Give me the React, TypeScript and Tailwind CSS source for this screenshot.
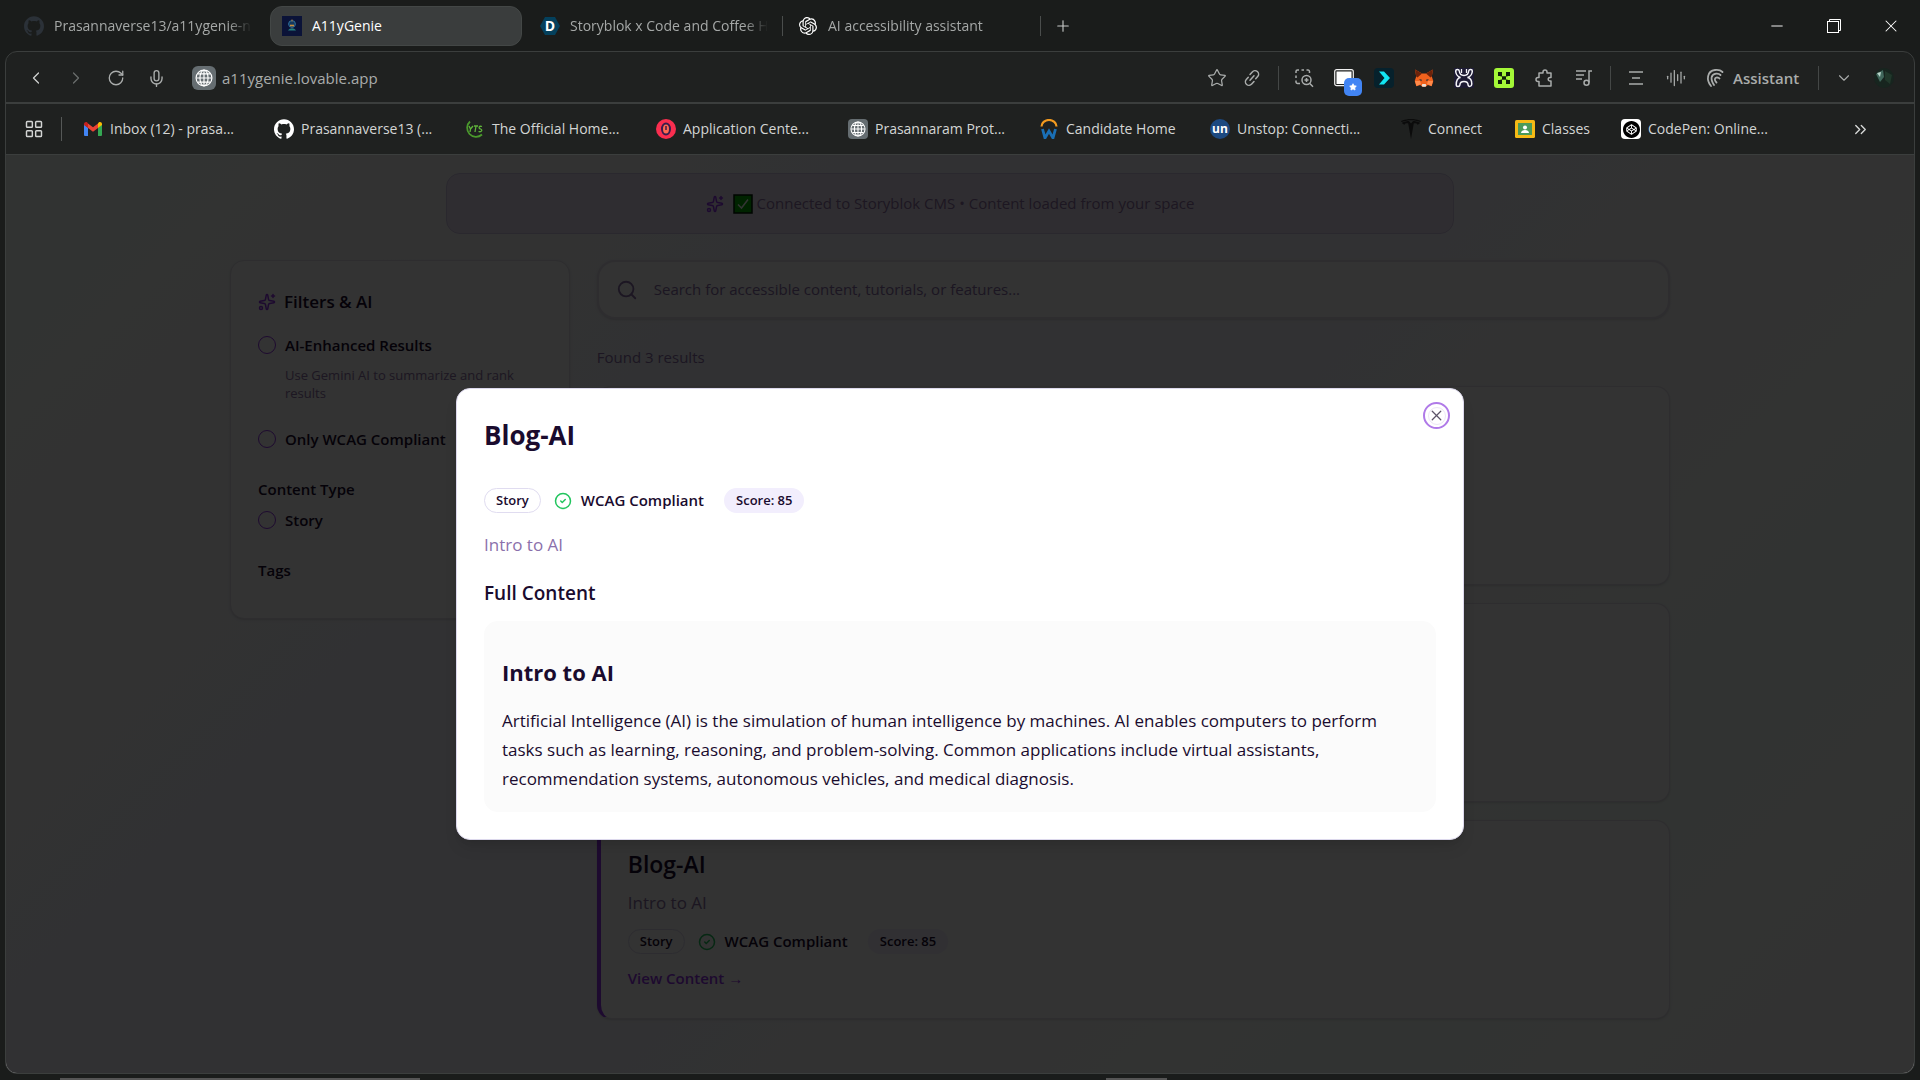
import React from "react";
import { Sparkles, Search, CircleCheck, X, ChevronLeft, ChevronRight, ChevronDown, RotateCw, Mic, LayoutGrid, Star, Plus, Minus, AudioLines, ChevronsRight } from "lucide-react";
import { SiGithub, SiOpenai, SiTesla, SiCodepen } from "react-icons/si";

const Gmail = () => (
  <svg viewBox="0 0 20 20" className="h-5 w-5">
    <path d="M1 5.5V16a1 1 0 0 0 1 1h3V8.5z" fill="#4285f4" />
    <path d="M15 8.5V17h3a1 1 0 0 0 1-1V5.500z" fill="#34a853" />
    <path d="M15 4.500V9l4-3V5c0-1.800-2-2.700-3.300-1.600z" fill="#fbbc04" />
    <path d="M5 9V4.500L10 8.300 15 4.500V9l-5 3.800z" fill="#ea4335" />
    <path d="M1 5v1l4 3V4.500l-.7-1.100C3 2.300 1 3.200 1 5z" fill="#c5221f" />
  </svg>
);

const Yts = () => (
  <svg viewBox="0 0 20 20" className="h-5 w-5">
    <path d="M5 2.500A8.500 8.500 0 0 0 17 15.500" fill="none" stroke="#4a9a2c" strokeWidth="1.800" />
    <path d="M4 7l1.500 3L8 7M5.500 10L5 13M9 7h4M11 7l-1 6M17 7.500c-3-1-4 1.500-1.500 2.500s1 3.500-2 2.500" fill="none" stroke="#5fb33a" strokeWidth="1.300" />
  </svg>
);

const OperaRed = () => (
  <svg viewBox="0 0 20 20" className="h-5 w-5">
    <circle cx="10" cy="10" r="10" fill="#fa2e4f" />
    <ellipse cx="10" cy="10" rx="4" ry="5.500" fill="#ff6a50" stroke="#3a1c4c" strokeWidth="2" />
    <path d="M10 7v4" stroke="#3a1c4c" strokeWidth="1.500" />
  </svg>
);

const GlobeTile = ({ big = false }: { big?: boolean }) => (
  <span className={big ? "flex h-6 w-6 items-center justify-center rounded-md bg-[#656d71] text-white" : "flex h-5 w-5 items-center justify-center rounded bg-[#656d71] text-white"}>
    <svg viewBox="0 0 20 20" className={big ? "h-[18px] w-[18px]" : "h-4 w-4"} fill="none" stroke="currentColor" strokeWidth="1.300">
      <circle cx="10" cy="10" r="8.800" />
      <ellipse cx="10" cy="10" rx="4.500" ry="8.800" />
      <path d="M10 1.500v17M1.500 10h17M3 5.500h14M3 14.500h14" />
    </svg>
  </span>
);

const Workday = () => (
  <svg viewBox="0 0 20 20" className="h-5 w-5">
    <path d="M2.500 7.500a7.500 6.500 0 0 1 15 0" fill="none" stroke="#f29a1f" strokeWidth="2.200" />
    <path d="M3.500 10l2.500 9 4-7 4 7 2.500-9" fill="none" stroke="#1a6fb5" strokeWidth="2.800" />
  </svg>
);

const Unstop = () => (
  <span className="flex h-5 w-5 items-center justify-center rounded-full bg-[#1c4980] text-[12px] font-bold leading-none text-white">un</span>
);

const Classroom = () => (
  <svg viewBox="0 0 20 20" className="h-5 w-5">
    <rect x="0" y="1" width="20" height="18" rx="1.500" fill="#f5ba15" />
    <rect x="3" y="4" width="14" height="12" fill="#4a9a58" />
    <circle cx="10" cy="8.500" r="2" fill="#fff" />
    <path d="M6 14c0-4 8-4 8 0z" fill="#fff" />
  </svg>
);

const GenieIcon = () => (
  <svg viewBox="0 0 20 20" className="h-5 w-5">
    <rect width="20" height="20" fill="#0b1338" />
    <circle cx="10" cy="8" r="3.400" fill="#14385e" stroke="#2f6f9c" strokeWidth="1" />
    <path d="M8 9.500h4" stroke="#c98f3c" strokeWidth="1.600" />
    <path d="M6 14.500c2-3 6-3 8 0z" fill="#267f7c" />
    <path d="M10 3.500v2" stroke="#b07f40" />
  </svg>
);

const Devfolio = () => (
  <span className="relative flex h-5 w-5 items-center justify-center text-[14px] font-bold leading-none text-white">
    <svg viewBox="0 0 20 20" className="absolute inset-0 h-5 w-5">
      <path d="M5 1h10l5 9-5 9H5l-5-9z" fill="#04405c" />
    </svg>
    <span className="relative">D</span>
  </span>
);

const Codepen = () => (
  <span className="flex h-5 w-5 items-center justify-center rounded-sm bg-white text-black"><SiCodepen size={17} /></span>
);

const ChainLink = () => (
  <svg viewBox="0 0 18 18" className="h-[18px] w-[18px]" fill="none" stroke="currentColor" strokeWidth="1.500" strokeLinecap="round">
    <path d="M7 5.500l2.300-2.600a3.500 3.500 0 0 1 5.400 4.700l-2 2.200M11 12.500l-2.300 2.600a3.500 3.500 0 0 1-5.400-4.700l2-2.200M7 11.200l4-4.400" />
  </svg>
);

const ZoomSelect = () => (
  <svg viewBox="0 0 20 20" className="h-5 w-5" fill="none" stroke="currentColor" strokeWidth="1.500">
    <path d="M2 5V3.500A1.500 1.500 0 0 1 3.500 2H5M7.500 2h2.500M12.500 2H14a1.500 1.500 0 0 1 1.500 1.500V5M2 7.500V10M2 12.500V14a1.500 1.500 0 0 0 1.500 1.500H6" />
    <circle cx="12.500" cy="12" r="4.500" />
    <path d="M15.800 15.500L19 18.800M12.500 10v4M10.500 12h4" />
  </svg>
);

const Capture = () => (
  <span className="relative block h-5 w-5">
    <svg viewBox="0 0 20 20" className="h-5 w-5">
      <rect x="0.700" y="1.700" width="18.600" height="16" rx="2" fill="#1f2120" stroke="#f1f1f1" strokeWidth="1.200" />
      <rect x="2.500" y="3.500" width="15" height="12.500" fill="#fff" />
    </svg>
    <span className="absolute left-[10px] top-[10px] flex h-[18px] w-[18px] items-center justify-center rounded-[5px] bg-[#4285f4] text-white">
      <Star size={8} fill="currentColor" />
    </span>
  </span>
);

const Arrow = () => (
  <svg viewBox="0 0 20 20" className="h-5 w-5">
    <rect width="20" height="20" rx="4" fill="#06212c" />
    <path d="M5 3.500h5l6 6.500-6 6.500H5L10.500 10z" fill="#12e5f2" />
  </svg>
);

const Fox = () => (
  <svg viewBox="0 0 20 20" className="h-5 w-5">
    <path d="M1 1.500L8 5.500h4l7-4-1.200 7L19.300 13l-1.600 5.200-3.900-1.100-2 1.600H8.200l-2-1.600-3.900 1.100L.7 13l1.500-4.500z" fill="#f0621d" />
    <path d="M1 1.500l7 4-4.500 4-1.300-1zM19 1.500l-7 4 4.500 4 1.300-1z" fill="#6d230b" />
    <path d="M1 13h5l1 3-4.500 2zM19 13h-5l-1 3 4.500 2z" fill="#ff8a4a" />
    <path d="M5 11l3 .7-.8 1.500zM15 11l-3 .7.8 1.500z" fill="#24303c" />
    <path d="M8.300 16h3.400l.5 1.800-.7.900h-3l-.7-.9z" fill="#e8e2da" />
  </svg>
);

const Bunny = () => (
  <svg viewBox="0 0 20 20" className="h-5 w-5">
    <rect width="20" height="20" fill="#1d1b33" />
    <path d="M6.500 9.500C3 8.500 1.700 5 1.700 3 1.700 1 5 1 5.300 3c.2 2 .7 4.500 4.700 4.500S14.500 5 14.700 3c.3-2 3.600-2 3.600 0 0 2-1.300 5.500-4.800 6.500 3.500.5 4.300 3.500 4.300 6.500 0 3-3.500 3-3.700 1 0-2.500-.9-3.500-4.100-3.500S5.900 14.500 5.900 17c-.2 2-3.700 2-3.700 0 0-3 .8-7 4.300-7.500z" fill="none" stroke="#f4f4f8" strokeWidth="1.500" />
    <path d="M7.500 1v4M12.500 1v4" stroke="#f4f4f8" strokeWidth="1.300" />
  </svg>
);

const GreenX = () => (
  <svg viewBox="0 0 20 20" className="h-5 w-5">
    <rect width="20" height="20" rx="3" fill="#a4f837" />
    <path d="M4 4h4v2.500h4V4h4v4h-2.500v4H16v4h-4v-2.500H8V16H4v-4h2.500V8H4z" fill="#10200a" />
    <path d="M8 6h4v2.500H8zM8 11.500h4V14H8zM4.500 8.500H8v3H4.500zM12 8.500h3.500v3H12z" fill="#a4f837" />
    <rect x="8" y="8.500" width="4" height="3" fill="#10200a" />
  </svg>
);

const PuzzleOutline = () => (
  <svg viewBox="0 0 20 20" className="h-5 w-5" fill="none" stroke="currentColor" strokeWidth="1.500" strokeLinejoin="round">
    <path d="M5 5h4V4a2 2 0 0 1 4 0v1h4v4.500h-1a1.800 1.800 0 0 0 0 3.600h1V18H5v-4.500H4a2 2 0 0 1 0-4h1z" />
  </svg>
);

const Playlist = () => (
  <svg viewBox="0 0 20 20" className="h-5 w-5" fill="none" stroke="currentColor" strokeWidth="1.500">
    <path d="M2 3h10M2 7h8M2 11h6M18 3h-3v11.500" />
    <circle cx="12.500" cy="14.800" r="2.500" />
  </svg>
);

const Lines = () => (
  <svg viewBox="0 0 16 16" className="h-4 w-4" stroke="currentColor" strokeWidth="1.500">
    <path d="M1 2h14M4 8h8M1 14h14" />
  </svg>
);

const Swirl = () => (
  <svg viewBox="0 0 20 20" className="h-5 w-5" fill="none" stroke="currentColor" strokeWidth="1.800" strokeLinecap="round">
    <path d="M5 18C0 12 1 3 9 2c3-.4 6 .5 7.500 2M8 17C4 11 5 6.500 10 5.700c2-.2 3.500.3 4.500 1.300M10.500 14.500C8 12 8.500 9.500 11 9.300c1 0 2 .4 2.500 1.200" />
  </svg>
);

const Avatar = () => (
  <svg viewBox="0 0 20 20" className="h-5 w-5">
    <circle cx="10" cy="10" r="10" fill="#17251f" />
    <path d="M2 6l7-4 1 7-4 5z" fill="#41685c" />
    <path d="M3 5l4-1-1 5z" fill="#b9d6cb" />
    <path d="M11 3l7 4-2 9-5-4z" fill="#21382b" />
  </svg>
);

const CheckBox = () => (
  <svg viewBox="0 0 20 20" className="h-5 w-5" role="img" aria-label="Success">
    <rect x="1" y="1" width="18" height="18" fill="#00b000" stroke="#001800" strokeWidth="1.500" />
    <path d="M5 10.500l3.500 3.500L15 5.500" fill="none" stroke="#fff" strokeWidth="1.500" />
  </svg>
);

const tabs = [
  { label: "Prasannaverse13/a11ygenie-nexus", icon: <SiGithub size={20} className="text-[#2b3138]" />, active: false, sep: false },
  { label: "A11yGenie", icon: <GenieIcon />, active: true, sep: false },
  { label: "Storyblok x Code and Coffee Hackathon", icon: <Devfolio />, active: false, sep: true },
  { label: "AI accessibility assistant", icon: <SiOpenai size={18} className="text-white" />, active: false, sep: true },
];

const bookmarks = [
  { label: "Inbox (12) - prasa...", icon: <Gmail />, width: "w-[191px]" },
  { label: "Prasannaverse13 (...", icon: <SiGithub size={20} className="text-white" />, width: "w-[191px]" },
  { label: "The Official Home...", icon: <Yts />, width: "w-[191px]" },
  { label: "Application Cente...", icon: <OperaRed />, width: "w-[192px]" },
  { label: "Prasannaram Prot...", icon: <GlobeTile />, width: "w-[191px]" },
  { label: "Candidate Home", icon: <Workday />, width: "w-[171px]" },
  { label: "Unstop: Connecti...", icon: <Unstop />, width: "w-[191px]" },
  { label: "Connect", icon: <SiTesla size={20} className="text-[#0b0b0b]" />, width: "w-[114px]" },
  { label: "Classes", icon: <Classroom />, width: "w-[106px]" },
  { label: "CodePen: Online...", icon: <Codepen />, width: "w-[191px]" },
];

function ToolButton({ label, children }: { label: string; children: React.ReactNode }) {
  return (
    <button aria-label={label} className="flex h-8 w-10 shrink-0 items-center justify-center">
      {children}
    </button>
  );
}

const Divider = () => <span className="h-6 w-px shrink-0 bg-[#444746]" />;

function Badges() {
  return (
    <div className="flex h-[25px] items-center">
      <span className="flex h-[25px] items-center rounded-full border border-[#e0dcf0] px-[11px] text-[13px] font-semibold">Story</span>
      <CircleCheck size={18} className="ml-[13px] text-[#22c55e]" />
      <span className="ml-[9px] text-[15px] font-semibold">WCAG Compliant</span>
      <span className="ml-5 flex h-[25px] items-center rounded-full bg-[#f2eefd] px-3 text-[13px] font-semibold">Score: 85</span>
    </div>
  );
}

function FilterOption({ id, label }: { id: string; label: string }) {
  return (
    <div className="flex h-[22px] items-center gap-[9px]">
      <input id={id} type="checkbox" className="h-[18px] w-[18px] appearance-none rounded-full border border-[#9333ea]" />
      <label htmlFor={id} className="text-[15px] font-semibold">{label}</label>
    </div>
  );
}

function ResultCard({ children }: { children?: React.ReactNode }) {
  return (
    <article className="flex min-h-[199px] flex-col rounded-[14px] border border-l-4 border-[#e3dfe8] border-l-[#9333ea] bg-[#fcfcfc] p-[27px] shadow-sm">
      {children}
    </article>
  );
}

function Browser() {
  return (
    <header className="text-[#c8cac9]">
      <nav aria-label="Tabs" className="flex h-[51px] items-center pl-3 text-sm">
        {tabs.map((t) => (
          <div key={t.label} className="flex items-center">
            <button
              className={
                t.active
                  ? "flex h-10 w-[252px] items-center gap-[10px] rounded-xl border border-[#434746] bg-[#3a3d3d] px-[11px] text-white"
                  : "flex h-10 w-[252px] items-center gap-[10px] px-3 text-[#a5a8a7]"
              }
            >
              <span className="flex h-5 w-5 shrink-0 items-center justify-center">{t.icon}</span>
              <span className={t.active ? "text-sm" : "min-w-0 grow overflow-hidden whitespace-nowrap text-left [mask-image:linear-gradient(90deg,#000_88%,transparent)]"}>{t.label}</span>
            </button>
            <span className={t.sep ? "mr-[3px] ml-[2px] h-5 w-px bg-[#4a4d4c]" : "w-1.5"} />
          </div>
        ))}
        <button aria-label="New tab" className="ml-[7px] flex h-6 w-6 items-center justify-center"><Plus size={18} strokeWidth={1.5} /></button>
        <div className="ml-auto mr-px flex items-center text-white">
          <button aria-label="Minimize" className="flex h-8 w-[57px] items-center justify-center"><Minus size={18} strokeWidth={1.25} /></button>
          <button aria-label="Restore" className="flex h-8 w-[57px] items-center justify-center">
            <svg viewBox="0 0 14 14" className="h-[14px] w-[14px]" fill="none" stroke="currentColor">
              <rect x="0.500" y="2.500" width="11" height="11" />
              <path d="M2.500 2.500v-2h11v11h-2" />
            </svg>
          </button>
          <button aria-label="Close" className="flex h-8 w-[57px] items-center justify-center"><X size={20} strokeWidth={1.25} /></button>
        </div>
      </nav>
    </header>
  );
}

function Toolbar() {
  return (
    <div className="flex h-[52px] items-center border-b-2 border-[#3b3e3d] pl-[10px] pr-[10px] pt-[2px] text-[#a9acab]">
      <ToolButton label="Back"><ChevronLeft size={20} strokeWidth={1.5} className="text-[#d0d2d1]" /></ToolButton>
      <ToolButton label="Forward"><ChevronRight size={20} strokeWidth={1.5} className="text-[#6a6d6c]" /></ToolButton>
      <ToolButton label="Reload"><RotateCw size={18} strokeWidth={1.75} /></ToolButton>
      <ToolButton label="Voice"><Mic size={19} strokeWidth={1.75} /></ToolButton>
      <button aria-label="Site information" className="ml-4"><GlobeTile big /></button>
      <input aria-label="Address" defaultValue="a11ygenie.lovable.app" className="ml-[6px] min-w-0 grow bg-transparent text-[15px] text-[#a9acab] outline-none" />
      <button aria-label="Bookmark this page" className="flex h-8 w-[35px] items-center justify-center"><Star size={20} strokeWidth={1.5} /></button>
      <button aria-label="Copy link" className="mr-[9px] flex h-8 w-[35px] items-center justify-center"><ChainLink /></button>
      <Divider />
      <span className="w-[5px]" />
      <ToolButton label="Search in selection"><ZoomSelect /></ToolButton>
      <ToolButton label="Capture"><Capture /></ToolButton>
      <ToolButton label="Arrow"><Arrow /></ToolButton>
      <ToolButton label="Wallet"><Fox /></ToolButton>
      <ToolButton label="Bunny"><Bunny /></ToolButton>
      <ToolButton label="Pixel"><GreenX /></ToolButton>
      <ToolButton label="Extensions"><PuzzleOutline /></ToolButton>
      <ToolButton label="Playlist"><Playlist /></ToolButton>
      <span className="w-[6px]" />
      <Divider />
      <span className="w-[5px]" />
      <ToolButton label="Reader"><Lines /></ToolButton>
      <ToolButton label="Listen"><AudioLines size={20} strokeWidth={1.5} /></ToolButton>
      <button className="flex h-8 w-[122px] items-center gap-[7px] pl-[10px] text-[15px] font-semibold"><Swirl />Assistant</button>
      <Divider />
      <span className="w-[5px]" />
      <ToolButton label="More"><ChevronDown size={18} strokeWidth={1.5} /></ToolButton>
      <ToolButton label="Profile"><Avatar /></ToolButton>
    </div>
  );
}

function Bookmarks() {
  return (
    <nav aria-label="Bookmarks" className="flex h-[51px] items-center border-b border-[#3b3e3d] text-sm text-[#d3d5d4]">
      <button aria-label="Bookmark folders" className="ml-[18px]"><LayoutGrid size={20} strokeWidth={1.75} /></button>
      <span className="ml-[17px] mr-[21px] h-6 w-px bg-[#555857]" />
      {bookmarks.map((b) => (
        <div key={b.label} className={b.width}>
          <a href="#bookmark" className="flex items-center gap-[7px] whitespace-nowrap">{b.icon}{b.label}</a>
        </div>
      ))}
      <button aria-label="More bookmarks" className="ml-auto mr-11"><ChevronsRight size={19} strokeWidth={1.75} /></button>
    </nav>
  );
}

function Dialog() {
  return (
    <section role="dialog" aria-modal="true" aria-labelledby="dialog-title" className="relative w-full max-w-[1008px] rounded-[14px] border border-[#dcd8ec] bg-white p-[27px] shadow-lg">
      <h1 id="dialog-title" className="mt-[3px] text-[26px] font-bold leading-8">Blog-AI</h1>
      <div className="mt-[37px]">
        <Badges />
      </div>
      <p className="mt-[18px] text-[17px] leading-7 text-[#8b70ab]">Intro to AI</p>
      <h2 className="mt-5 text-[19px] font-semibold leading-7">Full Content</h2>
      <div className="mt-[14px] rounded-[14px] bg-[#fbfbfb] px-[18px] pb-[19px] pt-[35px] text-[17px] leading-[29px]">
        <h3 className="mb-[18px] text-[22px] font-bold leading-8">Intro to AI</h3>
        <p>
          Artificial Intelligence (AI) is the simulation of human intelligence by machines. AI enables computers to perform tasks such as learning, reasoning, and problem-solving. Common applications include virtual assistants, recommendation systems, autonomous vehicles, and medical diagnosis.
        </p>
      </div>
      <button aria-label="Close dialog" className="absolute right-[13px] top-[13px] flex h-[27px] w-[27px] items-center justify-center rounded-full border-2 border-[#b07ae8] text-[#5c5468]">
        <span className="flex h-[18px] w-[18px] items-center justify-center rounded-full border border-[#ece6f5]">
          <X size={17} strokeWidth={1.75} className="shrink-0" />
        </span>
      </button>
    </section>
  );
}

export default function App() {
  return (
    <div className="flex h-screen flex-col overflow-hidden bg-[#1a1c1b] font-['Open_Sans',sans-serif] text-[#1a0b2e]">
      <Browser />
      <div className="mx-[5px] flex min-h-0 grow flex-col overflow-hidden rounded-xl border border-[#3b3e3d] bg-[#1f2120]">
        <Toolbar />
        <Bookmarks />
        <div className="relative min-h-0 grow overflow-hidden bg-[linear-gradient(135deg,#f3fff9_0%,#fafafa_16%,#f5f6fc_30%,#f5f6fc_54%,#fafafa_66%,#f5fff9_80%,#fafafa_96%)]">
          <div className="pr-5 pt-[18px]">
            <div className="mx-auto flex h-[61px] max-w-[1008px] items-center justify-center rounded-[14px] border border-[#cfc5e4] bg-[#ebe2f3] text-[#9073a8]">
              <Sparkles size={18} className="text-[#9333ea]" />
              <span className="ml-[9px] mr-1"><CheckBox /></span>
              <span className="text-[15px]">Connected to Storyblok CMS • Content loaded from your space</span>
            </div>
            <div className="mx-auto mt-[26px] grid max-w-[1440px] grid-cols-4 items-start gap-[27px]">
              <aside className="rounded-[14px] border border-[#e3dfe8] bg-[#fcfcfc] p-[27px] shadow-sm">
                <h2 className="flex items-center gap-2 text-[17px] font-semibold leading-7">
                  <Sparkles size={18} className="text-[#9333ea]" />
                  Filters &amp; AI
                </h2>
                <div className="mt-[18px]"><FilterOption id="ai" label="AI-Enhanced Results" /></div>
                <p className="ml-[27px] mt-[10px] text-[13px] leading-[18px] text-[#9073a8]">Use Gemini AI to summarize and rank results</p>
                <div className="mt-[26px]"><FilterOption id="wcag" label="Only WCAG Compliant" /></div>
                <h3 className="mt-7 text-[15px] font-semibold leading-[22px]">Content Type</h3>
                <div className="mt-[9px]"><FilterOption id="story" label="Story" /></div>
                <h3 className="mb-[10px] mt-7 text-[15px] font-semibold leading-[22px]">Tags</h3>
              </aside>
              <main className="col-span-3">
                <label className="flex h-[59px] items-center gap-4 rounded-[18px] border-2 border-[#e3dfec] bg-[#fcfcfc] px-[17px] shadow-sm">
                  <Search size={22} className="text-[#8b70ab]" />
                  <input type="search" aria-label="Search" placeholder="Search for accessible content, tutorials, or features..." className="min-w-0 grow bg-transparent text-[15px] placeholder:text-[#8b70ab]" />
                </label>
                <p className="mb-[18px] mt-[27px] text-[15px] leading-[22px] text-[#8b70ab]">Found 3 results</p>
                <div className="flex flex-col gap-[18px]">
                  <ResultCard />
                  <ResultCard />
                  <ResultCard>
                    <h2 className="text-[23px] font-semibold leading-8">Blog-AI</h2>
                    <p className="mt-[9px] text-[17px] leading-7 text-[#8a70a4]">Intro to AI</p>
                    <div className="mt-3">
                      <Badges />
                    </div>
                    <a href="#content" className="mt-3 text-[15px] font-semibold leading-[25px] text-[#9333ea]">View Content →</a>
                  </ResultCard>
                </div>
              </main>
            </div>
          </div>
          <div className="absolute inset-0 flex items-center justify-center bg-black/80">
            <Dialog />
          </div>
        </div>
      </div>
      <footer className="flex h-[6px] items-end pl-[60px]">
        <span className="h-[2px] w-[360px] bg-[#555]" />
        <span className="ml-[686px] h-[2px] w-[61px] bg-[#555]" />
      </footer>
    </div>
  );
}
